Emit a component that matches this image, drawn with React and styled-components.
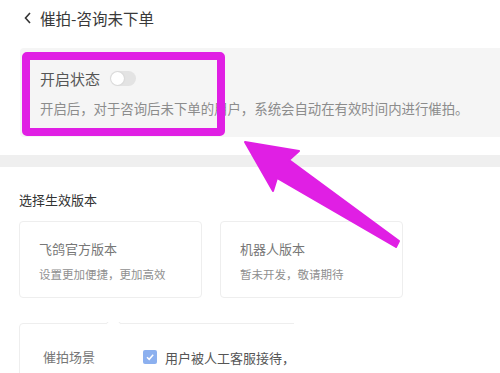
import React from 'react';
import styled, { createGlobalStyle } from 'styled-components';

const GlobalStyle = createGlobalStyle`
  html, body {
    margin: 0;
    padding: 0;
    background: #fff;
    overflow: hidden;
  }
  body {
    font-family: 'Noto Sans CJK SC', 'Noto Sans', sans-serif;
  }
`;

const Page = styled.div`
  position: relative;
  width: 500px;
  height: 373px;
  overflow: hidden;
`;

const Header = styled.div`
  display: flex;
  align-items: center;
  gap: 8px;
  height: 36px;
  padding-left: 24px;
  color: #3a3a3a;
  font-size: 15.5px;
`;

const StatusCard = styled.div`
  margin: 12px 0 0 20px;
  height: 89px;
  box-sizing: border-box;
  padding: 20px 0 0 20px;
  background: #f5f5f5;
  border-radius: 4px 0 0 4px;
`;

const StatusRow = styled.div`
  display: flex;
  align-items: center;
  gap: 10px;
  height: 20px;
  font-size: 15px;
  color: #555;
`;

const Toggle = styled.span`
  position: relative;
  width: 26px;
  height: 15px;
  border-radius: 8px;
  background: #e3e3e3;

  &::after {
    content: '';
    position: absolute;
    left: 1px;
    top: 1px;
    width: 13px;
    height: 13px;
    border-radius: 50%;
    background: #fff;
    box-shadow: 0 0 2px rgba(0, 0, 0, 0.15);
  }
`;

const Hint = styled.div`
  margin-top: 10px;
  line-height: 20px;
  font-size: 13.4px;
  color: #8c8c8c;
  white-space: nowrap;
`;

const Band = styled.div`
  margin-top: 18px;
  height: 12px;
  background: #efefef;
`;

const Section = styled.div`
  padding: 23px 0 0 19px;
`;

const SectionTitle = styled.div`
  line-height: 20px;
  font-size: 13px;
  color: #333;
`;

const Cards = styled.div`
  display: flex;
  gap: 18px;
  margin-top: 11px;
`;

const Card = styled.div`
  width: 183px;
  height: 77px;
  box-sizing: border-box;
  padding: 17px 0 0 19px;
  border: 1px solid #eeeeee;
  border-radius: 4px;
`;

const CardTitle = styled.div`
  line-height: 20px;
  font-size: 13px;
  color: #777;
`;

const CardDesc = styled.div`
  margin-top: 5px;
  line-height: 20px;
  font-size: 11.5px;
  color: #8f8f8f;
`;

const SceneClip = styled.div`
  position: relative;
  width: 275px;
  margin-top: 24px;
  overflow: hidden;
  padding-top: 1px;
`;

const ScenePanel = styled.div`
  position: relative;
  width: 400px;
  height: 120px;
  box-sizing: border-box;
  padding: 23px 0 0 23px;
  border: 1px solid #eeeeee;
  border-radius: 4px;
`;

const Caret = styled.span`
  position: absolute;
  left: 88px;
  top: -6px;
  width: 10px;
  height: 10px;
  background: #fff;
  border-left: 1px solid #eeeeee;
  border-top: 1px solid #eeeeee;
  transform: rotate(45deg);
`;

const SceneRow = styled.div`
  display: flex;
  align-items: flex-start;
`;

const SceneLabel = styled.div`
  width: 100px;
  line-height: 20px;
  font-size: 13px;
  color: #777;
`;

const Check = styled.span`
  flex: none;
  display: flex;
  align-items: center;
  justify-content: center;
  width: 14px;
  height: 14px;
  margin: 3px 8px 0 0;
  border-radius: 2px;
  background: #8cb0ef;
`;

const SceneText = styled.div`
  line-height: 21px;
  font-size: 13px;
  color: #555;
  white-space: nowrap;
`;

const HighlightBox = styled.div`
  position: absolute;
  left: 22px;
  top: 52px;
  width: 203px;
  height: 84px;
  box-sizing: border-box;
  border: 8px solid #e01fe4;
  border-radius: 5px;
  pointer-events: none;
`;

const Overlay = styled.svg`
  position: absolute;
  left: 0;
  top: 0;
  pointer-events: none;
`;

export default function App() {
  return (
    <Page>
      <GlobalStyle />
      <Header>
        <svg width="8" height="12" viewBox="0 0 8 12">
          <path d="M6 1 L1.5 6 L6 11" fill="none" stroke="#333" strokeWidth="1.6" />
        </svg>
        <span>催拍-咨询未下单</span>
      </Header>

      <StatusCard>
        <StatusRow>
          开启状态
          <Toggle />
        </StatusRow>
        <Hint>开启后，对于咨询后未下单的用户，系统会自动在有效时间内进行催拍。</Hint>
      </StatusCard>

      <Band />

      <Section>
        <SectionTitle>选择生效版本</SectionTitle>
        <Cards>
          <Card>
            <CardTitle>飞鸽官方版本</CardTitle>
            <CardDesc>设置更加便捷，更加高效</CardDesc>
          </Card>
          <Card>
            <CardTitle>机器人版本</CardTitle>
            <CardDesc>暂未开发，敬请期待</CardDesc>
          </Card>
        </Cards>

        <SceneClip>
          <ScenePanel>
            <Caret />
            <SceneRow>
              <SceneLabel>催拍场景</SceneLabel>
              <Check>
                <svg width="10" height="10" viewBox="0 0 10 10">
                  <path d="M2 5.2 L4.2 7.3 L8.2 2.8" fill="none" stroke="#fff" strokeWidth="1.5" />
                </svg>
              </Check>
              <SceneText>
                用户被人工客服接待，
                <br />
                在聊天过程中咨询后未下单
              </SceneText>
            </SceneRow>
          </ScenePanel>
        </SceneClip>
      </Section>

      <HighlightBox />
      <Overlay width="500" height="373" viewBox="0 0 500 373">
        <polygon
          points="245,142 299,151 289,160 399,241 396,247 277,178 273,191"
          fill="#e01fe4"
          stroke="#e01fe4"
          strokeWidth="2"
          strokeLinejoin="round"
        />
      </Overlay>
    </Page>
  );
}
